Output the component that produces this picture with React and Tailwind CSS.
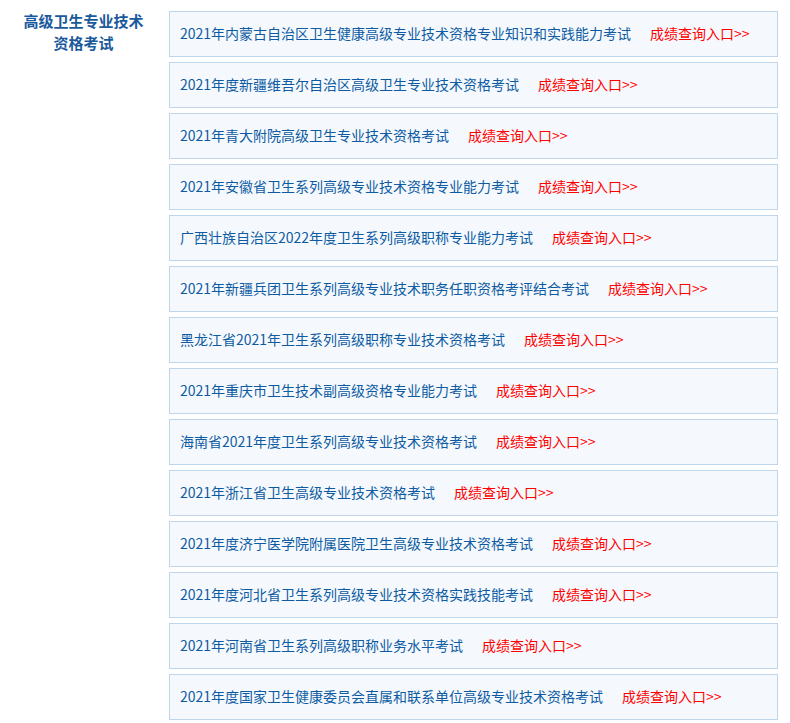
import React from 'react';

const exams = [
  '2021年内蒙古自治区卫生健康高级专业技术资格专业知识和实践能力考试',
  '2021年度新疆维吾尔自治区高级卫生专业技术资格考试',
  '2021年青大附院高级卫生专业技术资格考试',
  '2021年安徽省卫生系列高级专业技术资格专业能力考试',
  '广西壮族自治区2022年度卫生系列高级职称专业能力考试',
  '2021年新疆兵团卫生系列高级专业技术职务任职资格考评结合考试',
  '黑龙江省2021年卫生系列高级职称专业技术资格考试',
  '2021年重庆市卫生技术副高级资格专业能力考试',
  '海南省2021年度卫生系列高级专业技术资格考试',
  '2021年浙江省卫生高级专业技术资格考试',
  '2021年度济宁医学院附属医院卫生高级专业技术资格考试',
  '2021年度河北省卫生系列高级专业技术资格实践技能考试',
  '2021年河南省卫生系列高级职称业务水平考试',
  '2021年度国家卫生健康委员会直属和联系单位高级专业技术资格考试',
];

export default function App() {
  return (
    <div className="flex items-start bg-white pt-[11px] font-['Noto_Sans_CJK_SC','Noto_Sans',sans-serif]">
      {/* Category title */}
      <div className="-mt-[1px] w-[167px] shrink-0 text-center text-[15px] font-bold leading-[22px] text-[#1a5a9c]">
        高级卫生专业技术
        <br />
        资格考试
      </div>

      {/* Exam list */}
      <ul className="ml-[2px] flex w-[609px] flex-col gap-[5px]">
        {exams.map((title, i) => (
          <li
            key={i}
            className="flex h-[46px] items-center border border-[#bfd5ea] bg-[#f5f9fd] pl-[10px] pb-[1px] text-[14px]"
          >
            <a href="#" className="text-[#0d5ba3]">{title}</a>
            <a href="#" className="ml-[19px] text-[#ff0000]">成绩查询入口&gt;&gt;</a>
          </li>
        ))}
      </ul>
    </div>
  );
}
